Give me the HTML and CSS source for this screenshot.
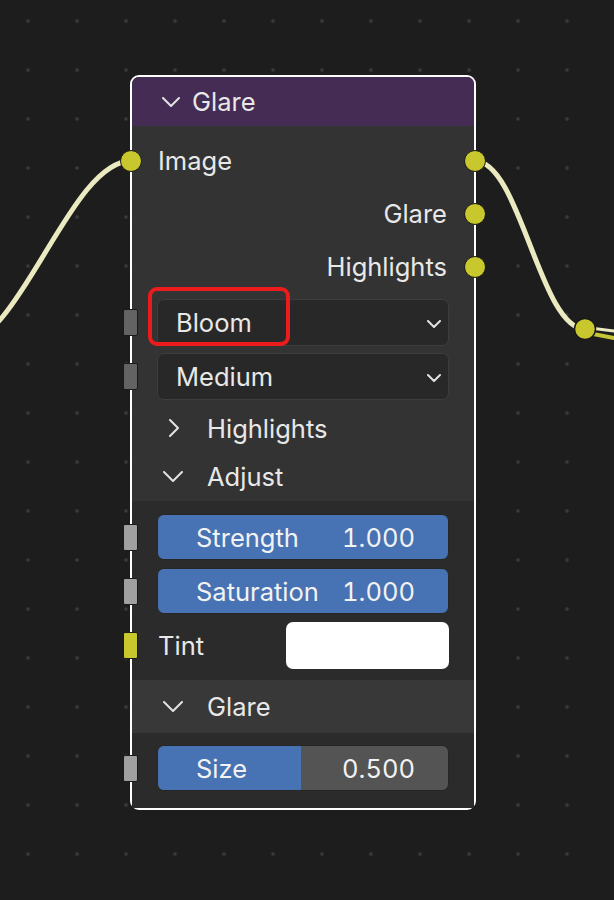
FILE: index.html
```html
<!DOCTYPE html>
<html>
<head>
<meta charset="utf-8">
<link rel="stylesheet" href="styles.css">
</head>
<body>
<div class="canvas">
  <svg class="wires" width="614" height="900" viewBox="0 0 614 900">
    <path d="M -41 345 C 20 345, 70 161, 131 161" class="wire"/>
    <path d="M 475 161 C 520 161, 540 329, 585 329" class="wire"/>
    <path d="M 590 328 L 614 331" class="wire thin"/>
    <path d="M 588 333 L 614 338" class="wire yellow"/>
    <circle cx="585" cy="329" r="10.5" class="sock-c"/>
  </svg>

  <div class="node">
    <div class="node-header">
      <svg class="chev-down" width="18" height="10" viewBox="0 0 18 10"><polyline points="1,1 9,9 17,1"/></svg>
      <span>Glare</span>
    </div>
    <div class="node-body">
      <div class="row io in">
        <span class="sock circle left"></span>
        <span>Image</span>
        <span class="sock circle right"></span>
      </div>
      <div class="row io out">
        <span>Glare</span>
        <span class="sock circle right"></span>
      </div>
      <div class="row io out">
        <span>Highlights</span>
        <span class="sock circle right"></span>
      </div>

      <div class="row ctl first-dd">
        <span class="sock square dark"></span>
        <div class="dropdown">
          <span>Bloom</span>
          <svg class="dd-chev" width="14" height="8" viewBox="0 0 14 8"><polyline points="1,1 7,7 13,1"/></svg>
        </div>
        <div class="mark"></div>
      </div>
      <div class="row ctl">
        <span class="sock square dark"></span>
        <div class="dropdown">
          <span>Medium</span>
          <svg class="dd-chev" width="14" height="8" viewBox="0 0 14 8"><polyline points="1,1 7,7 13,1"/></svg>
        </div>
      </div>

      <div class="panel-head first-ph">
        <span class="chev-box"><svg width="12" height="18" viewBox="0 0 12 18"><polyline points="2,1 10,9 2,17"/></svg></span>
        <span>Highlights</span>
      </div>
      <div class="panel-head">
        <span class="chev-box"><svg width="20" height="11" viewBox="0 0 20 11"><polyline points="1,1 10,10 19,1"/></svg></span>
        <span>Adjust</span>
      </div>
      <div class="panel-content adjust">
        <div class="row ctl">
          <span class="sock square light"></span>
          <div class="slider full"><span>Strength</span><span>1.000</span></div>
        </div>
        <div class="row ctl">
          <span class="sock square light"></span>
          <div class="slider full"><span>Saturation</span><span>1.000</span></div>
        </div>
        <div class="row tint">
          <span class="sock square yellow"></span>
          <span class="tint-label">Tint</span>
          <div class="swatch"></div>
        </div>
      </div>
      <div class="panel-head hl">
        <span class="chev-box"><svg width="20" height="11" viewBox="0 0 20 11"><polyline points="1,1 10,10 19,1"/></svg></span>
        <span>Glare</span>
      </div>
      <div class="panel-content last">
        <div class="row ctl">
          <span class="sock square light"></span>
          <div class="slider part">
            <div class="fill" style="width: 49.3%"></div>
            <span>Size</span><span>0.500</span>
          </div>
        </div>
      </div>
    </div>
  </div>
</div>
</body>
</html>
```

FILE: styles.css
```css
html, body {
  margin: 0;
  padding: 0;
}
body {
  width: 614px;
  height: 900px;
  overflow: hidden;
  font-family: "Inter", "DejaVu Sans", sans-serif;
  background-color: #1d1d1d;
  background-image: radial-gradient(circle at 24.5px 24.5px, #3a3a3a 0, #3a3a3a 1.6px, transparent 2.2px);
  background-size: 49px 49px;
  background-position: 3.5px -3.5px;
}
.canvas {
  position: relative;
  width: 614px;
  height: 900px;
}
.wires {
  position: absolute;
  left: 0;
  top: 0;
}
.wire {
  fill: none;
  stroke: #ebe9c0;
  stroke-width: 5;
  stroke-linecap: round;
}
.wire.thin {
  stroke-width: 3;
}
.wire.yellow {
  stroke: #c6c535;
  stroke-width: 4;
}
.sock-c {
  fill: #c8c72d;
  stroke: #1a1a1a;
  stroke-width: 1.5;
}

.node {
  position: absolute;
  left: 130px;
  top: 75px;
  width: 346px;
  box-sizing: border-box;
  border: 2px solid #ffffff;
  border-radius: 9px;
  background: #333333;
  color: #e8e8e8;
  font-size: 25.5px;
  font-variant-numeric: tabular-nums;
  font-feature-settings: "tnum" 1;
}
.node-header {
  height: 49px;
  background: #452c54;
  border-radius: 7px 7px 0 0;
  display: flex;
  align-items: center;
  padding-left: 30px;
  gap: 12px;
  color: #e8e8e8;
}
.chev-down polyline,
.chev-box polyline,
.dd-chev polyline {
  fill: none;
  stroke: #e2e2e2;
  stroke-width: 2;
  stroke-linecap: round;
  stroke-linejoin: round;
}
.node-body {
  padding-top: 8px;
  display: flex;
  flex-direction: column;
}
.row {
  position: relative;
  display: flex;
  align-items: center;
}
.row.io {
  height: 54px;
  padding: 0 27px 0 26px;
}
.row.io.out {
  justify-content: flex-end;
  height: 53px;
}
.row.io.in {
  height: 53px;
}
.sock {
  position: absolute;
  box-sizing: border-box;
}
.sock.circle {
  width: 22px;
  height: 22px;
  border-radius: 50%;
  background: #c8c72d;
  border: 1.5px solid #1a1a1a;
  top: 50%;
  margin-top: -11px;
}
.sock.circle.left { left: -12px; }
.sock.circle.right { right: -12px; }
.sock.square {
  width: 15px;
  height: 27px;
  left: -9px;
  top: 50%;
  margin-top: -13.5px;
  border: 1.5px solid #1a1a1a;
  border-radius: 2px;
}
.sock.square.dark { background: #636363; }
.sock.square.light { background: #a0a0a0; }
.sock.square.yellow { background: #c8c72d; }

.row.ctl {
  padding: 0 25px;
  margin-top: 7px;
}
.row.ctl.first-dd {
  margin-top: 6px;
}
.dropdown {
  flex: 1;
  height: 47px;
  box-sizing: border-box;
  background: #282828;
  border: 1px solid #3d3d3d;
  border-radius: 7px;
  display: flex;
  align-items: center;
  justify-content: space-between;
  padding: 0 7px 0 18px;
}
.dd-chev {
  margin-top: 2px;
}
.mark {
  position: absolute;
  left: 16px;
  top: -12px;
  width: 142px;
  height: 59px;
  box-sizing: border-box;
  border: 4px solid #ec1c1c;
  border-radius: 9px;
}
.panel-head {
  height: 49px;
  display: flex;
  align-items: center;
  padding-left: 31px;
  gap: 0;
}
.panel-head.first-ph {
  margin-top: 4px;
  height: 48px;
}
.chev-box {
  width: 44px;
  display: flex;
  align-items: center;
}
.first-ph .chev-box {
  padding-left: 5px;
  width: 39px;
}
.panel-content {
  background: #2b2b2b;
  padding-top: 6px;
  padding-bottom: 11px;
  display: flex;
  flex-direction: column;
}
.panel-content .row.ctl {
  margin-top: 7px;
}
.panel-content .row.ctl + .row.ctl {
  margin-top: 8px;
}
.slider {
  position: relative;
  flex: 1;
  height: 46px;
  box-sizing: border-box;
  border-radius: 7px;
  border: 1px solid #262626;
  display: flex;
  align-items: center;
  justify-content: space-between;
  padding: 0 33px 0 38px;
  color: #f2f2f2;
  overflow: hidden;
}
.slider.full {
  background: #4772b3;
}
.slider.part {
  background: #545454;
}
.slider .fill {
  position: absolute;
  left: 0;
  top: 0;
  bottom: 0;
  background: #4772b3;
}
.slider span {
  position: relative;
}
.row.tint {
  padding: 0 25px 0 26px;
  margin-top: 8px;
  height: 47px;
  justify-content: space-between;
}
.swatch {
  width: 163px;
  height: 47px;
  background: #ffffff;
  border-radius: 7px;
}
.panel-head.hl {
  background: #383838;
  height: 53px;
}
.panel-content.last {
  padding-top: 5px;
  padding-bottom: 17px;
}
```
